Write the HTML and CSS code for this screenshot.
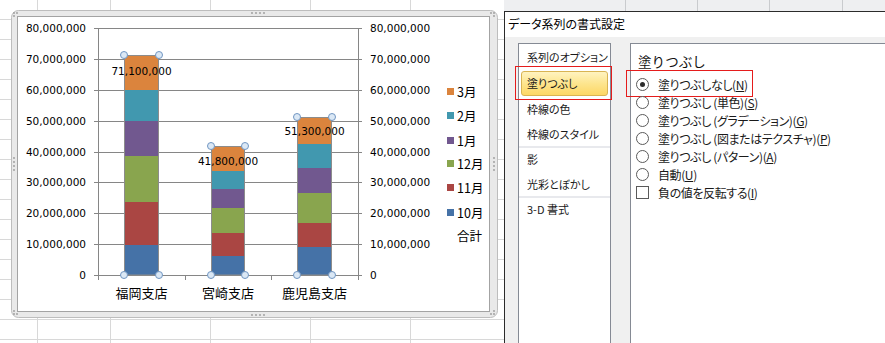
FILE: index.html
```html
<!DOCTYPE html>
<html lang="ja">
<head>
    <meta charset="UTF-8">
    <meta name="viewport" content="width=device-width, initial-scale=1.0">
    <title>データ系列の書式設定</title>
    <link rel="stylesheet" href="styles.css">
</head>
<body>
<div class="sheet">
    <!-- グラフ (選択中) -->
    <svg class="chart" width="500" height="322" viewBox="0 0 500 322">
        <rect class="frame-out" x="11.5" y="10.5" width="486" height="307" rx="7"/>
        <rect class="frame-in" x="17.5" y="16.5" width="472" height="295"/>
        <g class="grip">
            <circle cx="14" cy="13" r="0.9"/><circle cx="17" cy="13" r="0.9"/><circle cx="14" cy="16" r="0.9"/>
            <circle cx="252" cy="13" r="0.9"/><circle cx="256" cy="13" r="0.9"/><circle cx="260" cy="13" r="0.9"/><circle cx="264" cy="13" r="0.9"/>
            <circle cx="252" cy="315" r="0.9"/><circle cx="256" cy="315" r="0.9"/><circle cx="260" cy="315" r="0.9"/><circle cx="264" cy="315" r="0.9"/>
            <circle cx="14" cy="158" r="0.9"/><circle cx="14" cy="162" r="0.9"/><circle cx="14" cy="166" r="0.9"/><circle cx="14" cy="170" r="0.9"/>
            <circle cx="494" cy="158" r="0.9"/><circle cx="494" cy="162" r="0.9"/><circle cx="494" cy="166" r="0.9"/><circle cx="494" cy="170" r="0.9"/>
            <circle cx="14" cy="314" r="0.9"/><circle cx="17" cy="314" r="0.9"/><circle cx="14" cy="311" r="0.9"/>
            <circle cx="494" cy="314" r="0.9"/><circle cx="491" cy="314" r="0.9"/><circle cx="494" cy="311" r="0.9"/>
            <circle cx="494" cy="13" r="0.9"/><circle cx="491" cy="13" r="0.9"/><circle cx="494" cy="16" r="0.9"/>
        </g>

        <g class="axis">
            <path d="M98 28.5H358M98 59.5H358M98 90.5H358M98 121.5H358M98 152.5H358M98 182.5H358M98 213.5H358M98 244.5H358M94 275.5H362"/>
            <path d="M94 28.5H98M94 59.5H98M94 90.5H98M94 121.5H98M94 152.5H98M94 182.5H98M94 213.5H98M94 244.5H98"/>
            <path d="M358 28.5H362M358 59.5H362M358 90.5H362M358 121.5H362M358 152.5H362M358 182.5H362M358 213.5H362M358 244.5H362"/>
            <path d="M98.5 28V280M358.5 28V280M185.5 275V280M271.5 275V280"/>
        </g>

        <g class="num" text-anchor="end">
            <text x="86" y="28">80,000,000</text>
            <text x="86" y="59">70,000,000</text>
            <text x="86" y="90">60,000,000</text>
            <text x="86" y="121">50,000,000</text>
            <text x="86" y="152">40,000,000</text>
            <text x="86" y="182">30,000,000</text>
            <text x="86" y="213">20,000,000</text>
            <text x="86" y="244">10,000,000</text>
            <text x="86" y="275">0</text>
        </g>
        <g class="num">
            <text x="370" y="28">80,000,000</text>
            <text x="370" y="59">70,000,000</text>
            <text x="370" y="90">60,000,000</text>
            <text x="370" y="121">50,000,000</text>
            <text x="370" y="152">40,000,000</text>
            <text x="370" y="182">30,000,000</text>
            <text x="370" y="213">20,000,000</text>
            <text x="370" y="244">10,000,000</text>
            <text x="370" y="275">0</text>
        </g>

        <!-- 福岡支店 -->
        <rect class="s10" x="124" y="245" width="35" height="30"/>
        <rect class="s11" x="124" y="202" width="35" height="43"/>
        <rect class="s12" x="124" y="156" width="35" height="46"/>
        <rect class="s1" x="124" y="121" width="35" height="35"/>
        <rect class="s2" x="124" y="90" width="35" height="31"/>
        <rect class="s3" x="124" y="55" width="35" height="35"/>
        <rect class="bar-line" x="124.5" y="55.5" width="34" height="219.5"/>
        <!-- 宮崎支店 -->
        <rect class="s10" x="211" y="256" width="34" height="19"/>
        <rect class="s11" x="211" y="233" width="34" height="23"/>
        <rect class="s12" x="211" y="208" width="34" height="25"/>
        <rect class="s1" x="211" y="189" width="34" height="19"/>
        <rect class="s2" x="211" y="171" width="34" height="18"/>
        <rect class="s3" x="211" y="146" width="34" height="25"/>
        <rect class="bar-line" x="211.5" y="146.5" width="33" height="128.5"/>
        <!-- 鹿児島支店 -->
        <rect class="s10" x="297" y="247" width="35" height="28"/>
        <rect class="s11" x="297" y="223" width="35" height="24"/>
        <rect class="s12" x="297" y="193" width="35" height="30"/>
        <rect class="s1" x="297" y="168" width="35" height="25"/>
        <rect class="s2" x="297" y="144" width="35" height="24"/>
        <rect class="s3" x="297" y="117" width="35" height="27"/>
        <rect class="bar-line" x="297.5" y="117.5" width="34" height="157.5"/>

        <g class="handle">
            <circle cx="124" cy="55" r="3.5"/><circle cx="159" cy="55" r="3.5"/>
            <circle cx="124" cy="275" r="3.5"/><circle cx="159" cy="275" r="3.5"/>
            <circle cx="211" cy="146" r="3.5"/><circle cx="245" cy="146" r="3.5"/>
            <circle cx="211" cy="275" r="3.5"/><circle cx="245" cy="275" r="3.5"/>
            <circle cx="297" cy="117" r="3.5"/><circle cx="332" cy="117" r="3.5"/>
            <circle cx="297" cy="275" r="3.5"/><circle cx="332" cy="275" r="3.5"/>
        </g>

        <g class="num" text-anchor="middle">
            <text x="141.5" y="71">71,100,000</text>
            <text x="228" y="161">41,800,000</text>
            <text x="314.5" y="131">51,300,000</text>
        </g>

        <g class="cat" text-anchor="middle">
            <text x="141.5" y="292">福岡支店</text>
            <text x="228" y="292">宮崎支店</text>
            <text x="314.5" y="292">鹿児島支店</text>
        </g>

        <g class="legend">
            <rect class="s3" x="447" y="88" width="7" height="7"/><text x="457" y="91">3月</text>
            <rect class="s2" x="447" y="112" width="7" height="7"/><text x="457" y="115">2月</text>
            <rect class="s1" x="447" y="137" width="7" height="7"/><text x="457" y="140">1月</text>
            <rect class="s12" x="447" y="160" width="7" height="7"/><text x="457" y="163">12月</text>
            <rect class="s11" x="447" y="184" width="7" height="7"/><text x="457" y="187">11月</text>
            <rect class="s10" x="447" y="209" width="7" height="7"/><text x="457" y="212">10月</text>
            <text x="457" y="235">合計</text>
        </g>
    </svg>

    <div class="pane">
        <div class="pane-strip"></div>
        <div class="dialog">
            <div class="dlg-title">データ系列の書式設定</div>
            <div class="dlg-body">
                <ul class="nav">
                    <li>系列のオプション</li>
                    <li class="active">塗りつぶし<span class="mark nav-mark"></span></li>
                    <li>枠線の色</li>
                    <li>枠線のスタイル</li>
                    <li class="sep"></li>
                    <li>影</li>
                    <li>光彩とぼかし</li>
                    <li class="sep"></li>
                    <li>3-D 書式</li>
                </ul>
                <div class="panel">
                    <h2>塗りつぶし</h2>
                    <div class="opt"><span class="radio on"></span>塗りつぶしなし(<u>N</u>)<span class="mark opt-mark"></span></div>
                    <div class="opt"><span class="radio"></span>塗りつぶし (単色)(<u>S</u>)</div>
                    <div class="opt"><span class="radio"></span>塗りつぶし (グラデーション)(<u>G</u>)</div>
                    <div class="opt"><span class="radio"></span>塗りつぶし (図またはテクスチャ)(<u>P</u>)</div>
                    <div class="opt"><span class="radio"></span>塗りつぶし (パターン)(<u>A</u>)</div>
                    <div class="opt"><span class="radio"></span>自動(<u>U</u>)</div>
                    <div class="opt"><span class="check"></span>負の値を反転する(<u>I</u>)</div>
                </div>
            </div>
        </div>
    </div>
</div>
</body>
</html>
```

FILE: styles.css
```css
body {
    margin: 0;
    padding: 0;
    background-color: #ffffff;
}
.sheet {
    position: relative;
    width: 885px;
    height: 343px;
    overflow: hidden;
    background-color: #ffffff;
    background-image:
        linear-gradient(#d8d8d8, #d8d8d8),
        linear-gradient(#d8d8d8, #d8d8d8),
        linear-gradient(#d8d8d8, #d8d8d8),
        linear-gradient(#d8d8d8, #d8d8d8),
        linear-gradient(#d8d8d8, #d8d8d8),
        repeating-linear-gradient(to bottom, transparent 0 19px, #d8d8d8 19px 20px);
    background-size: 1px 100%, 1px 100%, 1px 100%, 1px 100%, 1px 100%, 100% 100%;
    background-position: 37px 0, 110px 0, 210px 0, 310px 0, 410px 0, 0 0;
    background-repeat: no-repeat;
}

/* グラフ */
.chart {
    position: absolute;
    left: 0;
    top: 0;
}
.frame-out {
    fill: #e9e9e9;
    stroke: #bdbdbd;
    stroke-width: 1;
}
.frame-in {
    fill: #ffffff;
    stroke: #a3a3a3;
    stroke-width: 1;
}
.grip circle {
    fill: #9a9a9a;
}
.axis path {
    fill: none;
    stroke: #868686;
    stroke-width: 1;
}
.num text {
    font-family: "DejaVu Sans", sans-serif;
    font-size: 10.5px;
    fill: #000000;
    dominant-baseline: central;
}
.cat text {
    font-family: "Noto Sans CJK JP", sans-serif;
    font-size: 13px;
    fill: #000000;
    dominant-baseline: central;
}
.legend text {
    font-family: "Noto Sans CJK JP", sans-serif;
    font-size: 12.5px;
    fill: #000000;
    dominant-baseline: central;
}
.s10 { fill: #4572a7; }
.s11 { fill: #aa4643; }
.s12 { fill: #89a54e; }
.s1  { fill: #71588f; }
.s2  { fill: #4198af; }
.s3  { fill: #db843d; }
.bar-line {
    fill: none;
    stroke: #8c8c8c;
    stroke-width: 1;
}
.handle circle {
    fill: #dbe8f5;
    stroke: #7196c2;
    stroke-width: 1;
}

/* ダイアログ */
.pane {
    position: absolute;
    left: 504px;
    top: 0;
    width: 381px;
    height: 343px;
    display: flex;
    flex-direction: column;
}
.pane-strip {
    height: 11px;
    background-color: #eeeff1;
    background-image:
        linear-gradient(#c9cbce, #c9cbce),
        linear-gradient(#c9cbce, #c9cbce),
        linear-gradient(#c9cbce, #c9cbce),
        linear-gradient(#c9cbce, #c9cbce);
    background-size: 1px 100%, 1px 100%, 1px 100%, 1px 100%;
    background-position: 121px 0, 193px 0, 265px 0, 338px 0;
    background-repeat: no-repeat;
}
.dialog {
    flex: 1;
    display: flex;
    flex-direction: column;
    border-top: 1px solid #2b2b2b;
    border-left: 1px solid #2b2b2b;
    background-color: #f0f0f0;
    font-family: "Noto Sans CJK JP", sans-serif;
    font-feature-settings: "palt";
    color: #000000;
}
.dlg-title {
    height: 25px;
    line-height: 24px;
    padding-left: 3px;
    font-size: 12px;
    background-color: #ffffff;
}
.dlg-body {
    flex: 1;
    display: flex;
    gap: 19px;
    padding: 6px 0 0 13px;
}
.nav {
    list-style: none;
    margin: 0;
    padding: 1px 0 0 0;
    width: 91px;
    background-color: #ffffff;
    border: 1px solid #858a94;
    border-bottom: none;
}
.nav li {
    position: relative;
    height: 25px;
    line-height: 25px;
    margin: 0 2px;
    padding-left: 6px;
    font-size: 11px;
    color: #1a1a1a;
    white-space: nowrap;
}
.nav li.active {
    height: 23px;
    line-height: 23px;
    margin: 1px 2px;
    border: 1px solid #d9b453;
    border-radius: 3px;
    padding-left: 5px;
    background: linear-gradient(#fff3c0, #fde58e 50%, #fdd766);
}
.nav li.sep {
    height: 2px;
    margin: -1px 0 -1px 0;
    padding: 0;
    background-color: #e8e9ed;
}
.mark {
    position: absolute;
    border: 1px solid #e51c1c;
}
.nav-mark {
    left: -7px;
    top: -6px;
    width: 95px;
    height: 32px;
}
.panel {
    flex: 1;
    background-color: #ffffff;
    border: 1px solid #858a94;
    border-right: none;
    border-bottom: none;
    padding-left: 5px;
}
.panel h2 {
    margin: 0;
    height: 31px;
    line-height: 35px;
    padding-left: 2px;
    font-size: 13.5px;
    font-feature-settings: normal;
    font-weight: normal;
    color: #111111;
}
.opt {
    position: relative;
    display: flex;
    align-items: center;
    height: 18px;
    font-size: 12px;
    letter-spacing: -0.4px;
    color: #1a1a1a;
    white-space: nowrap;
}
.radio {
    width: 11px;
    height: 11px;
    margin-right: 9px;
    border: 1px solid #5a5a5a;
    border-radius: 50%;
    background-color: #ffffff;
    position: relative;
}
.radio.on::after {
    content: "";
    position: absolute;
    left: 3px;
    top: 3px;
    width: 5px;
    height: 5px;
    border-radius: 50%;
    background-color: #2c2c2c;
}
.check {
    width: 11px;
    height: 11px;
    margin-right: 9px;
    border: 1px solid #5a5a5a;
    background-color: #ffffff;
}
.opt-mark {
    left: -10px;
    top: -5px;
    width: 125px;
    height: 25px;
}
```
